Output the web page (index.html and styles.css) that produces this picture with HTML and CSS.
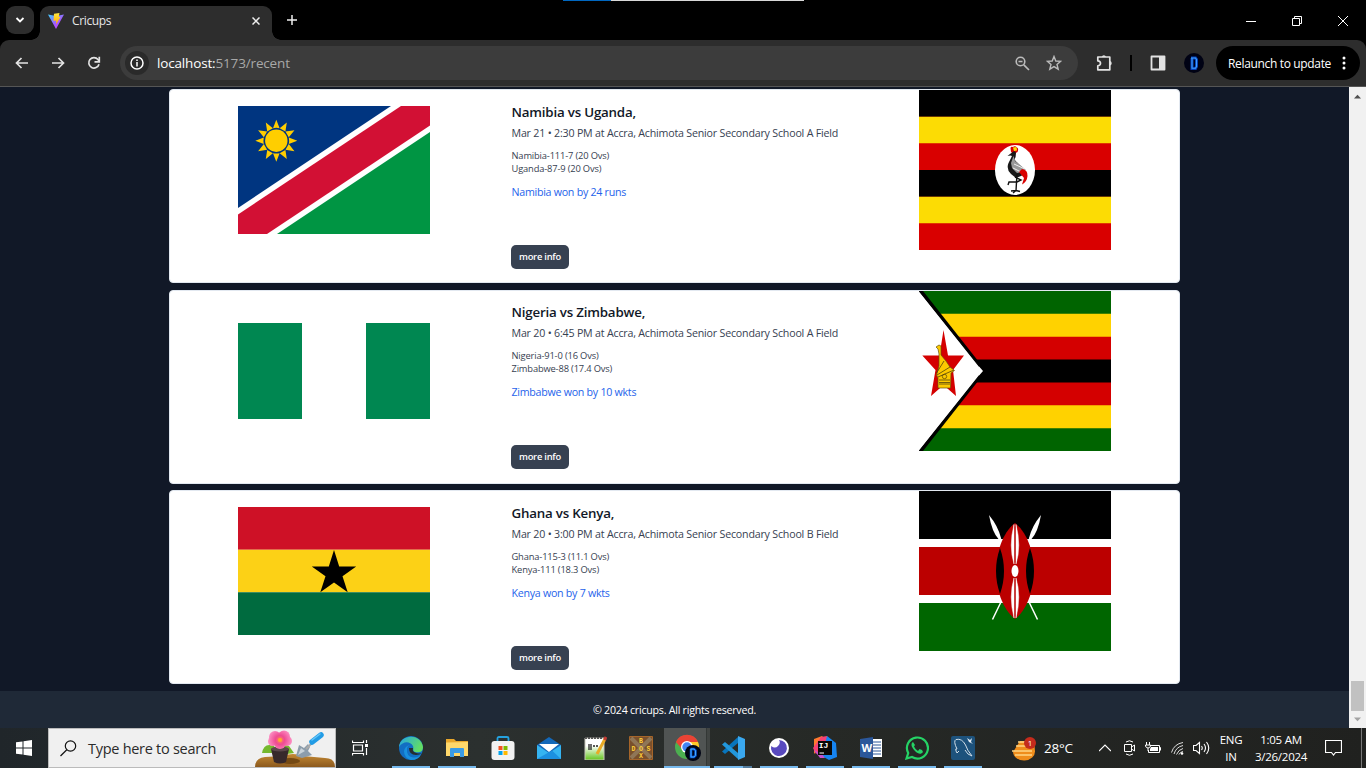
FILE: index.html
```html
<!DOCTYPE html>
<html lang="en">
<head>
<meta charset="utf-8">
<title>Cricups</title>
<link rel="stylesheet" href="styles.css">
</head>
<body>
<div class="screen">
  <header class="tabs">
    <span class="strip"></span>
    <span class="tab-search"><svg width="10" height="10" viewBox="0 0 10 10"><path d="M1.500 3 5 6.500 8.500 3" fill="none" stroke="#fff" stroke-width="1.800"/></svg></span>
    <div class="tab">
      <svg class="vite" width="16" height="16" viewBox="0 0 16 16"><defs><linearGradient id="vg" x2=".8" y2="1"><stop stop-color="#41d1ff"/><stop offset=".6" stop-color="#a259ff"/><stop offset="1" stop-color="#d040ff"/></linearGradient><linearGradient id="vy" x2="0" y2="1"><stop stop-color="#ffe83f"/><stop offset="1" stop-color="#ffa800"/></linearGradient></defs><path d="M0 1.500 8 3 16 1.500 8 16Z" fill="url(#vg)"/><path d="M6 .8 11.500 0 10.800 4 12.500 4 8 11.500 8.200 7.500 5.500 8Z" fill="url(#vy)"/></svg>
      <span class="tab-title">Cricups</span>
      <svg class="tab-close" width="8" height="8" viewBox="0 0 8 8"><path d="M.5.5 7.500 7.500M7.500.5.5 7.500" stroke="#eee" stroke-width="1.500"/></svg>
    </div>
    <svg class="plus" width="10" height="10" viewBox="0 0 10 10"><path d="M5 0V10M0 5H10" stroke="#eee" stroke-width="1.500"/></svg>
    <div class="win">
      <svg width="10" height="12" viewBox="0 0 10 12"><path d="M0 6.500H10" stroke="#fff"/></svg>
      <svg width="10" height="10" viewBox="0 0 10 10"><path d="M.5 2.500H7.500V9.500H.5ZM2.500 2.500V.5H9.500V7.500H7.500" fill="none" stroke="#fff"/></svg>
      <svg width="10" height="10" viewBox="0 0 10 10"><path d="M0 0 10 10M10 0 0 10" stroke="#fff"/></svg>
    </div>
  </header>
  <nav class="toolbar">
    <div class="nav-icons">
      <svg width="14" height="12" viewBox="0 0 14 12"><path d="M13 6H1.500M6.500 1 1.500 6 6.500 11" fill="none" stroke="#e3e3e3" stroke-width="1.700"/></svg>
      <svg width="14" height="12" viewBox="0 0 14 12"><path d="M1 6H12.500M7.500 1 12.500 6 7.500 11" fill="none" stroke="#e3e3e3" stroke-width="1.700"/></svg>
      <svg width="14" height="14" viewBox="0 0 14 14"><path d="M12 8.200A5.200 5.200 0 1 1 11 3.500L12 5" fill="none" stroke="#e3e3e3" stroke-width="1.700"/><path d="M12.300.8V5.800H7.500" fill="none" stroke="#e3e3e3" stroke-width="1.700"/></svg>
    </div>
    <div class="omni">
      <span class="info-dot"><svg width="14" height="14" viewBox="0 0 14 14"><circle cx="7" cy="7" r="6" fill="none" stroke="#fff" stroke-width="1.500"/><path d="M7 6V10.500M7 3.500V5" stroke="#fff" stroke-width="1.500"/></svg></span>
      <span class="url"><b>localhost:</b>5173/recent</span>
      <svg width="15" height="15" viewBox="0 0 15 15"><circle cx="5.500" cy="5.500" r="4.300" fill="none" stroke="#bbb" stroke-width="1.600"/><path d="M3.500 5.500H7.500M8.800 8.800 14 14" stroke="#bbb" stroke-width="1.700"/></svg>
      <svg class="star" width="16" height="16" viewBox="0 0 16 16"><path d="M8 1.500 9.800 6 14.700 6.300 11 9.400 12.200 14.200 8 11.600 3.800 14.200 5 9.400 1.300 6.300 6.200 6Z" fill="none" stroke="#bbb" stroke-width="1.400"/></svg>
    </div>
    <svg class="puzzle" width="18" height="18" viewBox="0 0 18 18"><path d="M1.800 3H13.800V15.800H1.800V11.800C5.400 11.800 5.400 6.800 1.800 6.800Z" fill="none" stroke="#e3e3e3" stroke-width="1.700" stroke-linejoin="round"/><path d="M5.700 3A2.200 2.200 0 0 1 10 3ZM14 7A2.400 2.400 0 0 1 14 11.600Z" fill="#e3e3e3"/></svg>
    <span class="sep"></span>
    <svg class="panel" width="16" height="16" viewBox="0 0 16 16"><path d="M1.500 1.500H14.500V14.500H1.500Z" fill="none" stroke="#e3e3e3" stroke-width="1.800" stroke-linejoin="round"/><path d="M9 1.500H15V14.500H9Z" fill="#e3e3e3"/></svg>
    <svg class="avatar" width="20" height="20" viewBox="0 0 20 20"><circle cx="10" cy="10" r="10" fill="#000214"/><path d="M7 5H11.500L12.500 6.500V13.500L11.500 15.500H8V5" fill="none" stroke="#0640b8" stroke-width="3"/><path d="M7 5H11.500L12.500 6.500V13.500L11.500 15.300H8V5" fill="none" stroke="#3fa0ff" stroke-width="1.100"/></svg>
    <div class="relaunch"><span>Relaunch to update</span><svg width="4" height="14" viewBox="0 0 4 14"><circle cx="2" cy="2" r="1.500" fill="#fff"/><circle cx="2" cy="7" r="1.500" fill="#fff"/><circle cx="2" cy="12" r="1.500" fill="#fff"/></svg></div>
  </nav>
  <div class="viewport">
    <div class="page">
      <main class="matches">
        <article class="card">
          <svg class="flag" width="192" height="128" viewBox="0 0 192 128"><path d="M0 0H192V128H0Z" fill="#fff"/><path d="M0 0H153L0 102Z" fill="#003580"/><path d="M163 0H192V19.500L29 128H0V108.500Z" fill="#d21034"/><path d="M192 26V128H39Z" fill="#009543"/>
            <g transform="translate(38.300 34.700)" fill="#ffce00"><circle r="11.200"/><g id="rays"><path d="M-3.300-12.500 0-21 3.300-12.500Q0-13.200-3.300-12.500ZM-3.300 12.500 0 21 3.300 12.500Q0 13.200-3.300 12.500Z"/><path transform="rotate(30)" d="M-3.300-12.500 0-21 3.300-12.500ZM-3.300 12.500 0 21 3.300 12.500Z"/><path transform="rotate(60)" d="M-3.300-12.500 0-21 3.300-12.500ZM-3.300 12.500 0 21 3.300 12.500Z"/></g><use href="#rays" transform="rotate(90)"/></g></svg>
          <div class="info">
            <h2>Namibia vs Uganda,</h2>
            <p class="when">Mar 21 • 2:30 PM at Accra, Achimota Senior Secondary School A Field</p>
            <p class="score">Namibia-111-7 (20 Ovs)</p><p class="score">Uganda-87-9 (20 Ovs)</p>
            <p class="result">Namibia won by 24 runs</p>
            <button class="more">more info</button>
          </div>
          <svg class="flag" width="192" height="160" viewBox="0 0 192 160"><path d="M0 0H192V160H0Z" fill="#d90000"/><path d="M0 0H192V26.670H0ZM0 80H192V106.670H0Z"/><path d="M0 26.670H192V53.330H0ZM0 106.670H192V133.330H0Z" fill="#fcdc04"/><ellipse cx="96" cy="80" rx="20" ry="25" fill="#fff"/>
            <path d="M91.500 58Q92 56 94 57 96 55.500 98 57.500 100 58.500 98.500 62L95 64 92 62Z" fill="#d90000"/><path d="M94 57.500 97.500 57 98 60.500 95 61Z" fill="#fcdc04"/>
            <path d="M93 62.500Q96 60 97 63 97 67 95.500 69.500 99 74 104 78L107 83 102 86 97 88 92 84Q87 79 89.500 73L93 66 91.500 65.500 88.500 66 91 64Z" fill="#171717"/><path d="M94.500 66 92 73 93 78 98 83 103 82 107 80 100 74 96 71Z" fill="#999"/><path d="M95 74 106 79M94 78 104 83" stroke="#eee"/><path d="M103 79Q109 80 108.500 86T103 94.500L105 88 100 82Z" fill="#d90000"/><path d="M98 84 97.500 92 97 101M96 87 102 90 98 92 90 92 89 95M92 101 97 100.500 101 101.500M94 103 97 100.500" stroke="#111" stroke-width="1.400" fill="none"/></svg>
        </article>
        <article class="card middle">
          <svg class="flag" width="192" height="96" viewBox="0 0 192 96"><path d="M0 0H64V96H0ZM128 0H192V96H128Z" fill="#008751"/><path d="M64 0H128V96H64Z" fill="#fff"/></svg>
          <div class="info">
            <h2>Nigeria vs Zimbabwe,</h2>
            <p class="when">Mar 20 • 6:45 PM at Accra, Achimota Senior Secondary School A Field</p>
            <p class="score">Nigeria-91-0 (16 Ovs)</p><p class="score">Zimbabwe-88 (17.4 Ovs)</p>
            <p class="result">Zimbabwe won by 10 wkts</p>
            <button class="more">more info</button>
          </div>
          <svg class="flag" width="192" height="160" viewBox="0 0 192 160"><path d="M0 0H192V160H0Z" fill="#006400"/><path d="M0 22.860H192V137.140H0Z" fill="#ffd200"/><path d="M0 45.700H192V114.300H0Z" fill="#d40000"/><path d="M0 68.570H192V91.430H0Z"/><path d="M0 0H4L67 80 4 160H0Z"/><path d="M0 0 64 80 0 160Z" fill="#fff"/><path d="M.3 0 64 80 .3 160" fill="none" stroke="#000" stroke-width="1.200"/><path d="M60 75.500 64 80 60 84.500Z" fill="#fff"/>
            <path d="M24.500 39 29 64.500H45L34 79 37 105 24.500 94 12 105 16.500 79 3.300 64.500H20.500Z" fill="#d40000"/><path d="M17 56 20 54 22 55V64L27 70 31 76 35.500 79.500 32 82 31.500 97 19 97 19 87 17.500 84 20 75 20 63 19 58Z" fill="#fcc900" stroke="#65520c" stroke-width=".7"/><path d="M31 76 18 84M35 79 19 86M25 70 17.500 82M20 89H31M20 91.500H31M20 93H31" stroke="#51410d" stroke-width=".8"/><circle cx="25.500" cy="85.500" r="2.200" fill="none" stroke="#51410d" stroke-width=".7"/></svg>
        </article>
        <article class="card">
          <svg class="flag" width="192" height="128" viewBox="0 0 192 128"><path d="M0 0H192V42.670H0Z" fill="#ce1126"/><path d="M0 42.670H192V85.330H0Z" fill="#fcd116"/><path d="M0 85.330H192V128H0Z" fill="#006b3f"/><path d="M96 43 101.200 59.500H118.200L104.500 69.300 109.700 85.300 96 75.400 82.300 85.300 87.500 69.300 73.800 59.500H90.800Z"/></svg>
          <div class="info">
            <h2>Ghana vs Kenya,</h2>
            <p class="when">Mar 20 • 3:00 PM at Accra, Achimota Senior Secondary School B Field</p>
            <p class="score">Ghana-115-3 (11.1 Ovs)</p><p class="score">Kenya-111 (18.3 Ovs)</p>
            <p class="result">Kenya won by 7 wkts</p>
            <button class="more">more info</button>
          </div>
          <svg class="flag" width="192" height="160" viewBox="0 0 192 160"><path d="M0 0H192V160H0Z" fill="#fff"/><path d="M0 0H192V48H0Z"/><path d="M0 56H192V104H0Z" fill="#b00"/><path d="M0 112H192V160H0Z" fill="#060"/>
            <g id="spear"><path d="M73.500 128.500 96 82M80 46 84 54" stroke="#fff" stroke-width="1.500"/><path d="M70 24Q79 35 82 47L83 53 79.500 48Q73 41 70 24Z" fill="#fff"/></g><use href="#spear" transform="matrix(-1 0 0 1 192 0)"/>
            <path d="M96 32C109 42 115 63 115 80S109 118 96 128C83 118 77 97 77 80S83 42 96 32Z" fill="#b00"/><path d="M81 57Q73 80 81 103Q89 80 81 57ZM111 57Q103 80 111 103Q119 80 111 57Z"/><ellipse cx="96" cy="80" rx="3.500" ry="6" fill="#fff"/><path d="M95 33.500V73Q89.500 55 95 33.500ZM97 33.500V73Q102.500 55 97 33.500ZM95 87V127Q89.500 105 95 87ZM97 87V127Q102.500 105 97 87Z" fill="#fff" stroke="#fff" stroke-width=".5"/></svg>
        </article>
      </main>
      <footer class="footer"><span>© 2024 cricups. All rights reserved.</span></footer>
    </div>
    <div class="scroll"><svg width="9" height="5" viewBox="0 0 9 5"><path d="M1 4.500 4.500.8 8 4.500Z" fill="#505050"/></svg><span class="thumb"></span><svg width="9" height="5" viewBox="0 0 9 5"><path d="M1 .5 4.500 4.200 8 .5Z" fill="#a3a3a3"/></svg></div>
  </div>
  <div class="taskbar">
    <span class="start"><svg width="16" height="16" viewBox="0 0 16 16"><path d="M0 2.300 6.500 1.400V7.500H0ZM7.500 1.200 16 0V7.500H7.500ZM0 8.500H6.500V14.600L0 13.700ZM7.500 8.500H16V16L7.500 14.800Z" fill="#fff"/></svg></span>
    <div class="search">
      <svg width="17" height="17" viewBox="0 0 17 17"><circle cx="10.500" cy="6" r="5.200" fill="none" stroke="#111" stroke-width="1.200"/><path d="M6.800 9.800.5 16" stroke="#111" stroke-width="1.200"/></svg>
      <span>Type here to search</span>
      <svg class="garden" width="80" height="38" viewBox="0 0 80 38"><defs><linearGradient id="soil" x2="0" y2="1"><stop stop-color="#c58a35"/><stop offset="1" stop-color="#8b591d"/></linearGradient><radialGradient id="pink" gradientUnits="userSpaceOnUse" cx="25" cy="11" r="13"><stop stop-color="#ff8b58"/><stop offset=".35" stop-color="#ee4a93"/><stop offset="1" stop-color="#ff9bcb"/></radialGradient></defs><path d="M0 38Q0 29 10 28L28 27Q38 23 48 27L70 29Q80 29 80 38Z" fill="url(#soil)"/><ellipse cx="35" cy="32" rx="10" ry="3" fill="#744913"/><path d="M7 24Q9 13 19 17L24 24ZM27 22Q28 14 34 17L39 24 32 25Z" fill="#75b82e"/><path d="M16 20H34L31 33Q25 36 19 33Z" fill="#37292b"/><ellipse cx="25" cy="20" rx="9" ry="2.500" fill="#5b474a"/><g fill="url(#pink)"><circle cx="20" cy="8" r="6"/><circle cx="29" cy="7.500" r="6"/><circle cx="32" cy="12" r="5"/><circle cx="25" cy="14" r="6"/><circle cx="17.500" cy="12.500" r="4.500"/></g><circle cx="25" cy="11" r="2" fill="#ffa82e"/><path d="M41 27 44 16 49 19 53 15 55 18 53 22 57 26 47 29Z" fill="#8c9dac"/><path d="M43 26 46 19 50 22Z" fill="#c9d3da"/><path d="M51 20 58 13" stroke="#aaa" stroke-width="2"/><path d="M57 13 66 6" stroke="#229ce5" stroke-width="5.500" stroke-linecap="round"/><path d="M57 11 65 5" stroke="#64c5f8" stroke-width="1.500" stroke-linecap="round"/></svg>
    </div>
    <span class="taskview"><svg width="17" height="16" viewBox="0 0 17 16"><path d="M.5.500V3M11.500.500V3M.5 15.500V13M11.500 15.500V13M.5 2.500H11.500M.5 13.500H11.500M1.500 5H10.500V11H1.500ZM14.500 0V3M14.500 8V15" fill="none" stroke="#fff" stroke-width="1.200"/><path d="M13 4H16V7H13Z" fill="#fff"/></svg></span>
    <div class="apps">
      <span class="app on"><svg width="24" height="24" viewBox="0 0 24 24"><defs><linearGradient id="edg" y2=".4"><stop stop-color="#22a5e6"/><stop offset="1" stop-color="#62dd65"/></linearGradient></defs><circle cx="12" cy="12" r="12" fill="#126ec3"/><path d="M0 11C1-2 22-3 24 11 24 16 20 17 16 16 13 15 15 13 14 10 11 5 4 5 0 11Z" fill="url(#edg)"/><path d="M8 13Q7 20 14 21.500 19 22 22 18 20 24 12 24 5 22 5 15 6 10 11 9 8 10 8 13Z" fill="#1890df"/><path d="M10 12Q10 19 17 19 21 19 22.500 17 20 18 16 16.500 13 15 14 12Z" fill="#262d2f"/></svg></span>
      <span class="app on"><svg width="22" height="19" viewBox="0 0 22 19"><path d="M0 1H8L10 3H22V18H0Z" fill="#e9a72b"/><path d="M0 4.500 22 4V18H0Z" fill="#ffd86b"/><path d="M4 19V11Q4 10 5 10H17Q18 10 18 11V19H14V15H8V19Z" fill="#3a9be5"/></svg></span>
      <span class="app"><svg width="24" height="24" viewBox="0 0 24 24"><path d="M6.500 6V2.500Q6.500 1 8 1H16Q17.500 1 17.500 2.500V6" fill="none" stroke="#24a1de" stroke-width="1.800"/><rect x=".5" y="5" width="23" height="19" rx="3" fill="#f2f2f2"/><path d="M7.500 10H11.500V14H7.500Z" fill="#f25022"/><path d="M12.500 10H16.500V14H12.500Z" fill="#7fba00"/><path d="M7.500 15H11.500V19H7.500Z" fill="#00a4ef"/><path d="M12.500 15H16.500V19H12.500Z" fill="#ffb900"/></svg></span>
      <span class="app"><svg width="24" height="22" viewBox="0 0 24 22"><path d="M0 8 12 0 24 8V22H0Z" fill="#1368b9"/><path d="M2 7H22L12 15Z" fill="#fff"/><path d="M0 8 12 16 24 8V22H0Z" fill="#35b4f1"/><path d="M0 22 15 13.500 24 22Z" fill="#1c90e0"/></svg></span>
      <span class="app"><svg width="24" height="24" viewBox="0 0 24 24"><defs><linearGradient id="npp" x2="0" y2="1"><stop offset=".35" stop-color="#fff"/><stop offset="1" stop-color="#64c51c"/></linearGradient></defs><path d="M2 2H21V24H2Z" fill="url(#npp)" stroke="#c7c7b9"/><path d="M2 2H20" stroke="#555" stroke-width="2" stroke-dasharray="2 1"/><path d="M6 14V8M8 8V14M10 10H12M13 10H15" stroke="#222" stroke-width="1.300"/><path d="M14 18 22 3" stroke="#e9ab25" stroke-width="3"/><path d="M21.500 4 23 1" stroke="#c43b35" stroke-width="3"/></svg></span>
      <span class="app"><svg width="24" height="24" viewBox="0 0 24 24"><path d="M.5.500H23.500V23.500H.5Z" fill="#79502c" stroke="#a66529"/><path d="M2 2 22 22M22 2 2 22" stroke="#8f7657" stroke-width="4"/><g class="dos"><text x="10" y="7">B</text><text x="2.500" y="14.500">D</text><text x="10" y="14.500">O</text><text x="17.500" y="14.500">S</text><text x="10" y="22">X</text></g></svg></span>
      <span class="app active"><svg width="28" height="28" viewBox="0 0 28 28"><circle cx="13" cy="13" r="12" fill="#4caf50"/><path d="M2 8A12 12 0 0 1 24 8L18 13 13 8 8 15Z" fill="#ea4335"/><path d="M13 8H24A12 12 0 0 1 13 25L18 17Z" fill="#ffca28"/><circle cx="13" cy="13" r="6" fill="#fff"/><circle cx="13" cy="13" r="4.700" fill="#4285f4"/><circle cx="19" cy="19" r="8" fill="#000515"/><path d="M16.500 15H20L21.500 16.500V21.500L20 23H17V15" fill="none" stroke="#0754d5" stroke-width="2.500"/><path d="M16.500 15H20L21.500 16.500V21.500L20 23H17V15" fill="none" stroke="#45abf9"/></svg></span>
      <span class="app on double"><svg width="24" height="24" viewBox="0 0 24 24"><path d="M17 0 24 3V21L17 24Z" fill="#3aa8ef"/><path d="M17 1V7L4 18 1 15.500Z" fill="#0875bd"/><path d="M17 23V17L4 6 1 8.500Z" fill="#2297dc"/></svg></span>
      <span class="app on"><svg width="20" height="20" viewBox="0 0 20 20"><circle cx="10" cy="10" r="10" fill="#fff"/><path d="M10 2A8 8 0 1 1 2.200 8Q6 11 9 8 12 5 10 2Z" fill="#5849be"/></svg></span>
      <span class="app on"><svg width="24" height="24" viewBox="0 0 24 24"><path d="M1 3 9 0 13 4 1 18Z" fill="#ff7a2f"/><path d="M8 1 14 0 16 5 3 18 0 12Z" fill="#f64175"/><path d="M14 0 23 7 24 21 16 24 9 20Z" fill="#1685f2"/><path d="M1 14 9 18 12 22 7 22Z" fill="#c350cf"/><path d="M5 5H19V19H5Z" fill="#080808"/><text class="ij" x="5.800" y="11.500">IJ</text><path d="M6.500 17H11" stroke="#fff"/></svg></span>
      <span class="app on"><svg width="24" height="24" viewBox="0 0 24 24"><path d="M13 3H23V21H13Z" fill="#fff"/><path d="M14 6H22M14 9H22M14 12H22M14 15H22M14 18H22" stroke="#2b579a"/><path d="M1 3 14 1V23L1 21Z" fill="#2b579a"/><text class="word" x="2.500" y="16">W</text></svg></span>
      <span class="app on"><svg width="24" height="24" viewBox="0 0 24 24"><path d="M1.500 22.500 3.200 17A10.500 10.500 0 1 1 7 21Z" fill="none" stroke="#25d366" stroke-width="2.200"/><path d="M8 6C5 8 7 12 10 15S16 19 18 16L17 14 14.500 13 13 15Q10 13 9 10.500L10 9Z" fill="#25d366"/></svg></span>
      <span class="app on"><svg width="24" height="24" viewBox="0 0 24 24"><rect width="24" height="24" rx="2" fill="#1d527c"/><path d="M5 15Q4 12 6 13 2 5 5 3.500 11 2 14.500 9 16 14 21 20M5 15 6 17 8 15M14 14 17 18 21 20" fill="none" stroke="#d1dee8"/><path d="M16 2 19 4 21 2 20 6 22 8 18 6Z" fill="#e6edf3"/></svg></span>
    </div>
    <div class="tray">
      <svg class="weather" width="25" height="25" viewBox="0 0 25 25"><path d="M1 16A11 9 0 0 0 23 15L22 5 8 5Z" fill="#ef8d1c"/><path d="M6 6H14M4 10H15M0 15H20M3 19H20" stroke="#ffd583" stroke-width="1.500"/><circle cx="18" cy="7" r="6" fill="#c42b1c"/><text class="badge" x="15.800" y="10">1</text></svg>
      <span class="temp">28°C</span>
      <svg class="chev" width="12" height="8" viewBox="0 0 12 8"><path d="M0 7 6 1 12 7" fill="none" stroke="#fff" stroke-width="1.200"/></svg>
      <svg class="meet" width="12" height="16" viewBox="0 0 12 16"><path d="M.5 4.500H7.500V11.500H.5ZM7.500 7 10.500 5V11L7.500 9M2 2Q5.500-.5 9 2M2 14Q5.500 16.500 9 14" fill="none" stroke="#fff"/></svg>
      <svg class="bat" width="16" height="12" viewBox="0 0 16 12"><path d="M5.500 3.500H14.500V10.500H3.500V8M14.500 5.500H15.500V8.500M1.500 0V3M4.500 0V3M.5 3H5.500V4Q5 6 3 6T.5 4ZM3 6V9" fill="none" stroke="#fff"/><path d="M6 5H13V9H5V7Z" fill="#fff"/></svg>
      <svg class="wifi" width="13" height="13" viewBox="0 0 13 13"><path d="M.5 10.500Q3 2 12 .5M3 12Q5 5 12 3.500M5.500 12.500Q7.500 7.500 12 6.500M8 12.500Q9 10 12 9.500" fill="none" stroke="#ddd"/><circle cx="11" cy="11.500" r="1.300" fill="#fff"/></svg>
      <svg class="vol" width="17" height="14" viewBox="0 0 17 14"><path d="M.5 4.500H3L6.500 1.500V12.500L3 9.500H.5ZM8.500 5Q10 7 8.500 9M11 3Q14 7 11 11M13.500 1Q18 7 13.500 13" fill="none" stroke="#fff" stroke-width="1.100"/></svg>
      <span class="lang"><span>ENG</span><span>IN</span></span>
      <span class="clock"><span>1:05 AM</span><span>3/26/2024</span></span>
      <svg class="note" width="17" height="17" viewBox="0 0 17 17"><path d="M.5.500H16.500V12.500H10.500L8.500 15 6.500 12.500H.5Z" fill="none" stroke="#fff" stroke-width="1.200"/></svg>
      <span class="edge"></span>
    </div>
  </div>
</div>
</body>
</html>
```
FILE: styles.css
```css
* { box-sizing: border-box; }
body { margin: 0; background: #000; font-family: "Open Sans", "Noto Sans", sans-serif; }
h2, p { margin: 0; white-space: nowrap; }
svg { display: block; flex: none; }
.screen { width: 1366px; height: 768px; overflow: hidden; display: flex; flex-direction: column; }

/* Browser frame */
.tabs { height: 40px; flex: none; background: #000; display: flex; position: relative; padding-left: 6px; }
.strip { position: absolute; left: 563px; top: 0; width: 241px; height: 1px; background: linear-gradient(90deg, #0067c0 48px, #d8d8d8 48px); }
.tab-search { width: 28px; height: 28px; margin: 6px 6px 0 0; border-radius: 9px; background: #2d2d2d; display: grid; place-items: center; }
.tab { width: 232px; height: 34px; margin-top: 6px; padding: 0 12px 5px 8px; border-radius: 9px 9px 0 0; background: #2d2d2d; display: flex; align-items: center; position: relative; }
.tab::before, .tab::after { content: ""; position: absolute; bottom: 0; width: 9px; height: 9px; }
.tab::before { left: -9px; background: radial-gradient(circle at 0 0, #000 8.500px, #2d2d2d 9px); }
.tab::after { right: -9px; background: radial-gradient(circle at 100% 0, #000 8.500px, #2d2d2d 9px); }
.vite { margin-right: 8px; }
.tab-title { font-size: 12px; color: #e8e8e8; letter-spacing: -.35px; }
.tab-close { margin-left: auto; }
.plus { margin: 15px 0 0 15px; }
.win { margin: 15px 18px 0 auto; display: flex; gap: 36px; height: 11px; align-items: center; }
.toolbar { height: 47px; flex: none; background: linear-gradient(#2d2d2d, #2d2d2d) 0 0 / 100% 46px no-repeat #555; border-radius: 9px 9px 0 0; display: flex; align-items: center; padding: 0 6px 1px 15px; }
.nav-icons { display: flex; gap: 22px; width: 105px; align-items: center; }
.omni { width: 958px; height: 34px; border-radius: 17px; background: #3c3c3c; display: flex; align-items: center; padding: 0 16px 0 5px; }
.info-dot { width: 24px; height: 24px; border-radius: 50%; background: #2a2a2a; display: grid; place-items: center; margin-right: 8px; }
.url { font-size: 13.500px; color: #a8a8a8; margin-right: auto; letter-spacing: -.16px; }
.url b { font-weight: 400; color: #fff; }
.star { margin-left: 16px; }
.puzzle { margin-left: 18px; }
.sep { width: 2px; height: 16px; background: #000; margin-left: 16px; }
.panel { margin-left: 18px; }
.avatar { margin-left: 18px; }
.relaunch { margin-left: 12px; width: 144px; height: 34px; border-radius: 17px; background: #000; color: #fff; font-size: 12px; white-space: nowrap; display: flex; align-items: center; justify-content: space-between; padding: 0 14px 0 12px; letter-spacing: -.34px; }

/* Match list */
.viewport { height: 641px; flex: none; display: flex; background: #111827; }
.page { width: 1349px; display: flex; flex-direction: column; }
.matches { flex: none; height: 604px; padding-top: 2px; display: flex; flex-direction: column; align-items: center; }
.card { width: 1011px; height: 194px; margin-bottom: 6px; border: 1px solid #e2e8f0; border-radius: 4px; background: #fff; display: flex; padding: 0 68px; }
.card:first-child { margin-bottom: 7px; }
.flag { align-self: flex-start; margin-top: calc((160px - var(--h, 160px)) / 2); }
.flag[height="128"] { --h: 128px; }
.flag[height="96"] { --h: 96px; }
.info { margin-left: 81px; width: 408px; padding-top: 13px; display: flex; flex-direction: column; align-items: flex-start; }
.info h2, .info p { padding-left: .5px; }
.middle .info { padding-top: 12px; }
h2 { font-size: 13.330px; line-height: 18px; font-weight: 650; color: #111827; letter-spacing: -.2px; }
.when { font-size: 10.670px; line-height: 16px; margin: 4px 0 8px; color: #374151; letter-spacing: -.2px; }
.score { font-size: 9.330px; line-height: 13.330px; color: #374151; letter-spacing: -.16px; }
.result { font-size: 10.670px; line-height: 16px; margin-top: 8px; color: #2563eb; letter-spacing: -.27px; }
.more { font: 600 9.330px/14px "Open Sans", sans-serif; letter-spacing: -.22px; width: 58px; height: 24px; padding: 0; margin-top: 45.300px; border: 0; border-radius: 5px; background: #374151; color: #fff; }
.footer { height: 37px; background: #1f2937; color: #fff; font-size: 10.670px; letter-spacing: -.25px; display: grid; place-items: center; }
.scroll { width: 17px; background: #f1f1f1; display: flex; flex-direction: column; align-items: center; padding: 7px 0 6px; }
.thumb { width: 13px; height: 30px; background: #c1c1c1; margin: auto 0 6px; }

/* Desktop taskbar */
.taskbar { height: 40px; background: linear-gradient(90deg, #20262a, #2b302f 35%, #262926 60%, #20211f); display: flex; color: #fff; }
.start { width: 48px; display: grid; place-items: center; }
.search { width: 288px; background: #f0f0f0; border: 1px solid #bbb; display: flex; align-items: center; padding-left: 11px; color: #2b2b2b; font-size: 14.500px; letter-spacing: -.28px; }
.search span { margin-left: 11px; white-space: nowrap; }
.garden { margin-left: auto; align-self: flex-end; }
.taskview { width: 51px; padding-right: 2px; display: grid; place-items: center; }
.apps { display: flex; padding-left: .5px; }
.app { width: 46px; height: 40px; display: grid; place-items: center; border-bottom: 2px solid transparent; padding-top: 1px; position: relative; }
.on::after { content: ""; position: absolute; left: 4px; right: 4px; bottom: -2px; height: 2px; background: #76b9ed; }
.active { padding-left: 2px; background: linear-gradient(90deg, #505453 42px, #262b29 42px, #414543 43px); border-bottom-color: #76b9ed; }
.double::after { background: linear-gradient(90deg, #76b9ed 29px, #547d9e 29px); }
.dos { font: bold 6.500px "Liberation Mono", monospace; fill: #ffcf38; }
.ij { font: bold 8px "Liberation Mono", monospace; fill: #fff; }
.word { font: bold 11px "Open Sans", sans-serif; fill: #fff; }
.badge { font: 8px "Open Sans", sans-serif; fill: #fff; }
.tray { flex: 1; display: flex; align-items: center; padding-left: 26px; }
.temp { font-size: 13.500px; margin-left: 7.500px; width: 30px; white-space: nowrap; letter-spacing: -.2px; }
.chev { margin-left: 25px; }
.meet { margin-left: 13px; }
.bat { margin-left: 9px; }
.wifi { margin-left: 10px; }
.vol { margin-left: 9px; }
.lang, .clock { display: flex; flex-direction: column; align-items: center; font-size: 11.500px; line-height: 17px; white-space: nowrap; letter-spacing: -.25px; }
.lang { margin-left: 9px; width: 24px; }
.clock { margin-left: 11px; width: 54px; }
.note { margin-left: 17px; }
.edge { margin-left: auto; width: 5px; height: 40px; border-left: 1px solid #777; }
```
